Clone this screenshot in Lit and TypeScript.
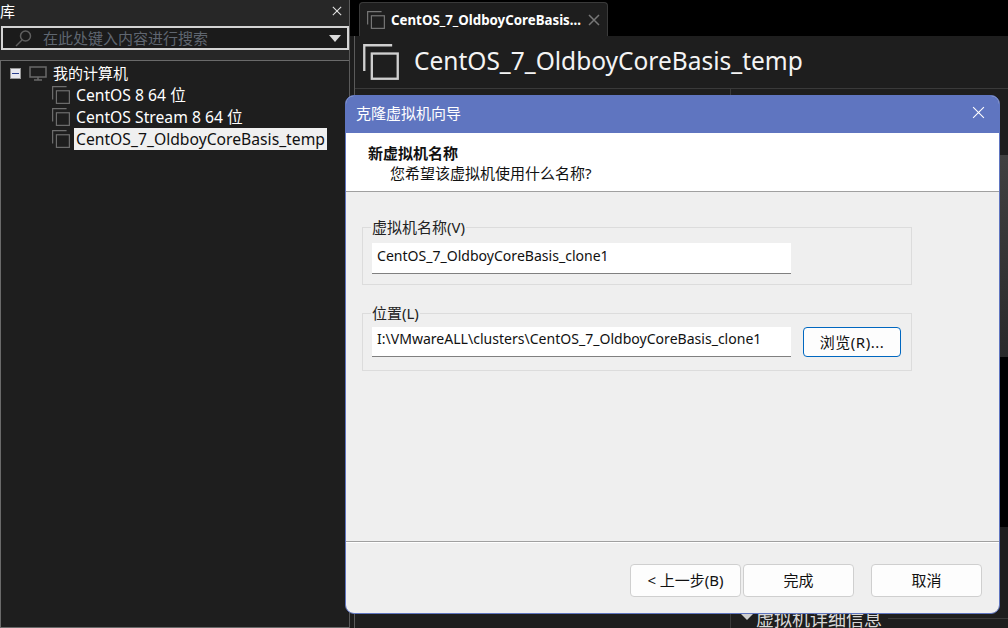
import { LitElement, html, css, svg } from "lit";
import { customElement } from "lit/decorators.js";

const vmIcon = (size: number, color: string, w = 1.3) => svg`<svg class="vm" width=${size} height=${size} viewBox="0 0 20 20" fill="none" stroke=${color} stroke-width=${w}><path d="M.7 15V.7h15.5" /><rect x="4.9" y="5.3" width="14.4" height="14"/></svg>`;

@customElement("app-root")
export class AppRoot extends LitElement {
  static styles = css`
    :host { display: block; width: 1008px; height: 628px; overflow: hidden; position: relative; background: #000; font-family: "Noto Sans", "Noto Sans CJK SC", sans-serif; font-size: 15px; color: #fff; }
    .shell { display: grid; grid-template-columns: 350px 1fr; height: 628px; }
    .left { background: #272727; display: flex; flex-direction: column; border-right: 1px solid #5a5a5a; box-sizing: border-box; }
    .lib-head { height: 24px; display: flex; align-items: center; justify-content: space-between; padding: 0 7px 3px 0; box-sizing: border-box; font-size: 15px; flex: none; }
    .x { display: block; }
    .search { margin: 2px 0 0 1px; height: 24px; border: 2px solid #d4d4d4; box-sizing: border-box; background: #1b1b1b; display: flex; align-items: center; padding: 0 6px 0 12px; gap: 11px; color: #5f6670; font-size: 15px; flex: none; }
    .search span { flex: 1; padding-bottom: 2px; }
    .tri { width: 0; height: 0; border-left: 6px solid transparent; border-right: 6px solid transparent; border-top: 7px solid #dcdcdc; }
    .tree { margin-top: 10px; flex: 1; border: 1px solid #6a6a6a; border-right: 0; background: #1e1e1e; padding: 1px 0 0 9px; display: flex; flex-direction: column; }
    .root-row { display: flex; align-items: center; height: 22px; gap: 6px; font-size: 15px; }
    .root-row .label { padding-bottom: 2px; }
    .minus { width: 11px; height: 11px; box-sizing: border-box; background: #e8e8ee; border: 1px solid #999; display: flex; align-items: center; justify-content: center; }
    .minus i { display: block; width: 7px; height: 1px; background: #2a3f8f; }
    .mon { margin-left: 2px; }
    .vm-row { display: flex; align-items: center; height: 22px; gap: 4px; padding-left: 42px; font-size: 15.7px; }
    .vm { flex: none; }
    .vm-row span { padding: 0 2px; height: 22px; line-height: 22px; white-space: nowrap; }
    .vm-row .sel { background: #f0f0f0; color: #111; }
    .right { display: flex; flex-direction: column; min-width: 0; background: #1c1c1c; }
    .tabs { height: 36px; flex: none; display: flex; align-items: flex-end; padding-left: 9px; background: #000; }
    .tab { width: 249px; height: 34px; box-sizing: border-box; background: #1e1e1e; border: 1px solid #3a3a3a; border-bottom: 0; border-radius: 4px 4px 0 0; display: flex; align-items: center; gap: 6px; padding: 0 7px; font-size: 13.3px; font-weight: 700; white-space: nowrap; }
    .tab span { flex: 1; }
    .lower { flex: 1; margin-left: 4px; border-left: 1px solid #5a5a5a; display: flex; flex-direction: column; min-height: 0; }
    .title { height: 53px; flex: none; background: #1e1e1e; border-bottom: 1px solid #3a3a3a; box-sizing: border-box; display: flex; align-items: center; gap: 15px; padding-left: 8px; font-size: 24.5px; color: #f4f4f4; }
    .title span { padding-bottom: 3px; }
    .content { flex: 1; background: #1e1e1e; display: grid; grid-template-columns: 376px 1fr; }
    .col-a { border-right: 1px solid #3a3a3a; }
    .col-b { display: flex; align-items: flex-end; padding-left: 10px; position: relative; }
    .rail { position: absolute; right: 0; top: 66px; width: 8px; display: flex; flex-direction: column; }
    .thumb { height: 202px; background: linear-gradient(#404040, #2a2a2a); }
    .track { height: 170px; background: #000; }
    .details { display: flex; align-items: center; gap: 3px; height: 20px; color: #d8d8d8; font-size: 18px; width: 100%; }
    .details .t2 { width: 0; height: 0; border-left: 6px solid transparent; border-right: 6px solid transparent; border-top: 6px solid #cfcfcf; margin-top: -3px; }
    .details hr { flex: 1; border: 0; border-top: 1px solid #3a3a3a; margin: 0 0 0 3px; }

    .dialog { position: absolute; left: 345px; top: 95px; width: 655px; height: 519px; box-sizing: border-box; border: 1px solid #5f75c0; border-radius: 9px; background: #efefef; color: #111; display: flex; flex-direction: column; overflow: hidden; font-size: 15px; }
    .d-title { height: 37px; flex: none; background: #5f75c0; color: #fff; display: flex; align-items: center; justify-content: space-between; padding: 0 14px 4px 10px; box-sizing: border-box; font-size: 15px; }
    .d-head { height: 59px; flex: none; background: #fff; border-bottom: 1px solid #a0a0a0; box-sizing: border-box; padding: 10px 22px 0; line-height: 20px; font-size: 15px; }
    .d-head b { display: block; font-weight: 700; }
    .d-head div { padding-left: 22px; }
    .d-body { flex: 1; padding: 35px 0 0 16px; display: flex; flex-direction: column; gap: 28px; }
    .group { width: 550px; box-sizing: border-box; border: 1px solid #dcdcdc; position: relative; height: 58px; padding: 15px 8px 0 9px; display: flex; gap: 12px; }
    .legend { position: absolute; left: 8px; top: -11px; background: #efefef; padding: 0 1px; font-size: 15px; line-height: 20px; color: #222; }
    .group.loc { padding-top: 13px; }
    .input { width: 419px; height: 31px; box-sizing: border-box; background: #fff; border-bottom: 1px solid #808080; padding: 0 5px; font-size: 14.05px; line-height: 26px; white-space: nowrap; }
    .loc .input { height: 30px; line-height: 24px; }
    button { font-family: inherit; font-size: 15px; color: #111; padding: 0 0 2px; }
    .browse { width: 98px; height: 30px; box-sizing: border-box; background: #fdfdfd; border: 1px solid #0067c0; border-radius: 4px; letter-spacing: 0.5px; }
    .d-foot { height: 72px; flex: none; border-top: 1px solid #a0a0a0; box-shadow: inset 0 1px 0 #fff; box-sizing: border-box; padding: 22px 16px 0 284px; display: flex; }
    .btn { width: 111px; height: 33px; box-sizing: border-box; background: #fdfdfd; border: 1px solid #cfcfcf; border-radius: 4px; }
    .btn.m { margin-left: 2px; margin-right: 17px; }
  `;

  render() {
    const x = (s: number, c: string, w = 1.3) => svg`<svg class="x" width=${s} height=${s} viewBox="0 0 12 12" stroke=${c} stroke-width=${w} fill="none"><path d="M1 1l10 10M11 1L1 11"/></svg>`;
    return html`
      <div class="shell">
        <div class="left">
          <div class="lib-head"><span>库</span>${x(10, "#e0e0e0")}</div>
          <div class="search">
            <svg width="17" height="17" viewBox="0 0 17 17" fill="none" stroke="#5f5f5f" stroke-width="1.5"><circle cx="10.5" cy="6" r="5"/><path d="M7 10l-6 6"/></svg>
            <span>在此处键入内容进行搜索</span><i class="tri"></i>
          </div>
          <div class="tree">
            <div class="root-row"><span class="minus"><i></i></span>
              <svg class="mon" width="18" height="15" viewBox="0 0 18 15" fill="none" stroke="#6a6a6a" stroke-width="1.5"><rect x="1" y="1" width="16" height="10"/><path d="M9 11v3M5 14h8"/></svg>
              <span class="label">我的计算机</span></div>
            <div class="vm-row">${vmIcon(18, "#6f6f6f")}<span>CentOS 8 64 位</span></div>
            <div class="vm-row">${vmIcon(18, "#6f6f6f")}<span>CentOS Stream 8 64 位</span></div>
            <div class="vm-row">${vmIcon(18, "#6f6f6f")}<span class="sel">CentOS_7_OldboyCoreBasis_temp</span></div>
          </div>
        </div>
        <div class="right">
          <div class="tabs"><div class="tab">${vmIcon(18, "#777")}<span>CentOS_7_OldboyCoreBasis...</span>${x(12, "#777", 1.5)}</div></div>
          <div class="lower">
            <div class="title">${vmIcon(36, "#cfcfcf")}<span>CentOS_7_OldboyCoreBasis_temp</span></div>
            <div class="content"><div class="col-a"></div>
              <div class="col-b">
                <div class="rail"><div class="thumb"></div><div class="track"></div></div>
                <div class="details"><i class="t2"></i><span>虚拟机详细信息</span><hr/></div>
              </div>
            </div>
          </div>
        </div>
      </div>
      <div class="dialog">
        <div class="d-title"><span>克隆虚拟机向导</span>${x(13, "#fff", 1)}</div>
        <div class="d-head"><b>新虚拟机名称</b><div>您希望该虚拟机使用什么名称?</div></div>
        <div class="d-body">
          <div class="group"><span class="legend">虚拟机名称(V)</span><div class="input">CentOS_7_OldboyCoreBasis_clone1</div></div>
          <div class="group loc"><span class="legend">位置(L)</span><div class="input">I:\\VMwareALL\\clusters\\CentOS_7_OldboyCoreBasis_clone1</div><button class="browse">浏览(R)...</button></div>
        </div>
        <div class="d-foot"><button class="btn">&lt; 上一步(B)</button><button class="btn m">完成</button><button class="btn">取消</button></div>
      </div>
    `;
  }
}
